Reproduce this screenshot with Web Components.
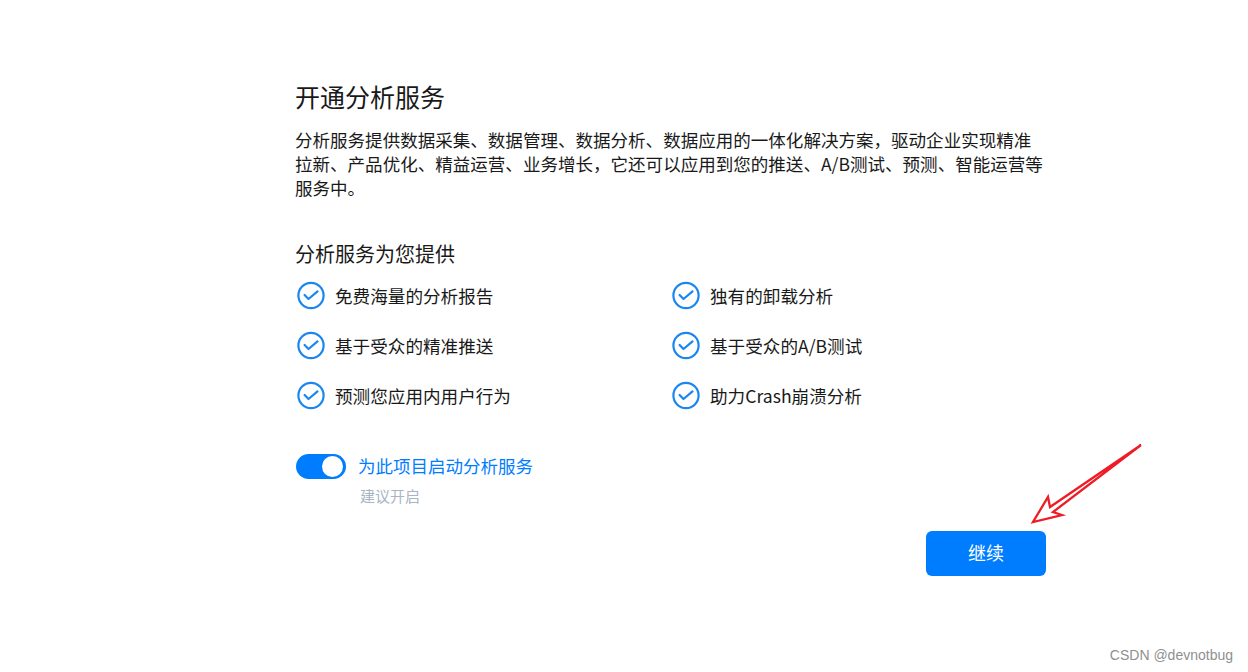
<!DOCTYPE html>
<html lang="zh">
<head>
<meta charset="utf-8">
<style>
  html, body { margin: 0; height: 100%; background: #fff; }
  body { font-family: "Noto Sans CJK SC", "Liberation Sans", sans-serif; color: #191919; overflow: hidden; }
</style>
</head>
<body>
<service-page></service-page>
<script>
class CheckItem extends HTMLElement {
  constructor() {
    super();
    this.attachShadow({ mode: 'open' });
    this.shadowRoot.innerHTML = `
      <style>
        :host { display: flex; align-items: center; gap: 10px; height: 28px; font-size: 17.6px; color: #191919; }
        svg { width: 28px; height: 28px; flex: none; overflow: visible; }
      </style>
      <svg viewBox="0 0 28 28" fill="none" stroke="#1a86f0" stroke-width="2.2">
        <circle cx="14" cy="14.5" r="12.6"/>
        <path d="M7.6 14l3.9 4 9-7.6" stroke-linecap="round" stroke-linejoin="round"/>
      </svg>
      <slot></slot>
    `;
  }
}
customElements.define('check-item', CheckItem);

class ToggleSwitch extends HTMLElement {
  constructor() {
    super();
    this.attachShadow({ mode: 'open' });
    this.shadowRoot.innerHTML = `
      <style>
        :host { display: flex; justify-content: flex-end; align-items: center; width: 50px; height: 25px; padding: 2px 3px; box-sizing: border-box; border-radius: 13px; background: #007dff; }
        i { width: 21px; height: 21px; border-radius: 50%; background: #fff; }
      </style>
      <i></i>
    `;
  }
}
customElements.define('toggle-switch', ToggleSwitch);

class ServicePage extends HTMLElement {
  constructor() {
    super();
    this.attachShadow({ mode: 'open' });
    this.shadowRoot.innerHTML = `
      <style>
        :host { display: block; position: relative; height: 672px; box-sizing: border-box; padding: 78px 202px 0 295px; }
        h1 { margin: 0; font-size: 25px; line-height: 36px; font-weight: 400; color: #191919; }
        p { margin: 14px 0 0; font-size: 17.55px; line-height: 24px; }
        h2 { margin: 40px 0 0; font-size: 20px; line-height: 28px; font-weight: 400; }
        .grid { display: grid; grid-template-columns: 375px 1fr; row-gap: 22px; margin: 13px 0 0 2px; }
        .toggle-row { display: flex; align-items: center; gap: 12px; margin: 43px 0 0 1px; height: 28px; color: #007dff; font-size: 17.5px; }
        .toggle-row span { margin-bottom: 2px; }
        .hint { margin: 6px 0 0 65px; font-size: 15px; line-height: 20px; color: #a9b4c4; }
        .actions { display: flex; justify-content: flex-end; margin-top: 25px; }
        button { width: 120px; height: 45px; padding: 0 0 3px; border: 0; border-radius: 6px; background: #007dff; color: #fff; font: inherit; font-size: 18px; }
        .arrow { position: absolute; left: 1025px; top: 440px; }
        .mark { position: absolute; right: 15px; bottom: 9px; font: 14px "Liberation Sans", sans-serif; color: #8f8f8f; }
      </style>
      <h1>开通分析服务</h1>
      <p>分析服务提供数据采集、数据管理、数据分析、数据应用的一体化解决方案，驱动企业实现精准拉新、产品优化、精益运营、业务增长，它还可以应用到您的推送、A/B测试、预测、智能运营等服务中。</p>
      <h2>分析服务为您提供</h2>
      <div class="grid">
        <check-item>免费海量的分析报告</check-item>
        <check-item>独有的卸载分析</check-item>
        <check-item>基于受众的精准推送</check-item>
        <check-item>基于受众的A/B测试</check-item>
        <check-item>预测您应用内用户行为</check-item>
        <check-item>助力Crash崩溃分析</check-item>
      </div>
      <div class="toggle-row"><toggle-switch></toggle-switch><span>为此项目启动分析服务</span></div>
      <div class="hint">建议开启</div>
      <div class="actions"><button>继续</button></div>
      <svg class="arrow" width="125" height="90" viewBox="0 0 125 90" fill="none" stroke="#ee1c25" stroke-width="2.3">
        <path d="M116 5L25 67L23 57L8 82L37 75L28 72L116 5" stroke-linejoin="miter"/>
      </svg>
      <div class="mark">CSDN @devnotbug</div>
    `;
  }
}
customElements.define('service-page', ServicePage);
</script>
</body>
</html>
